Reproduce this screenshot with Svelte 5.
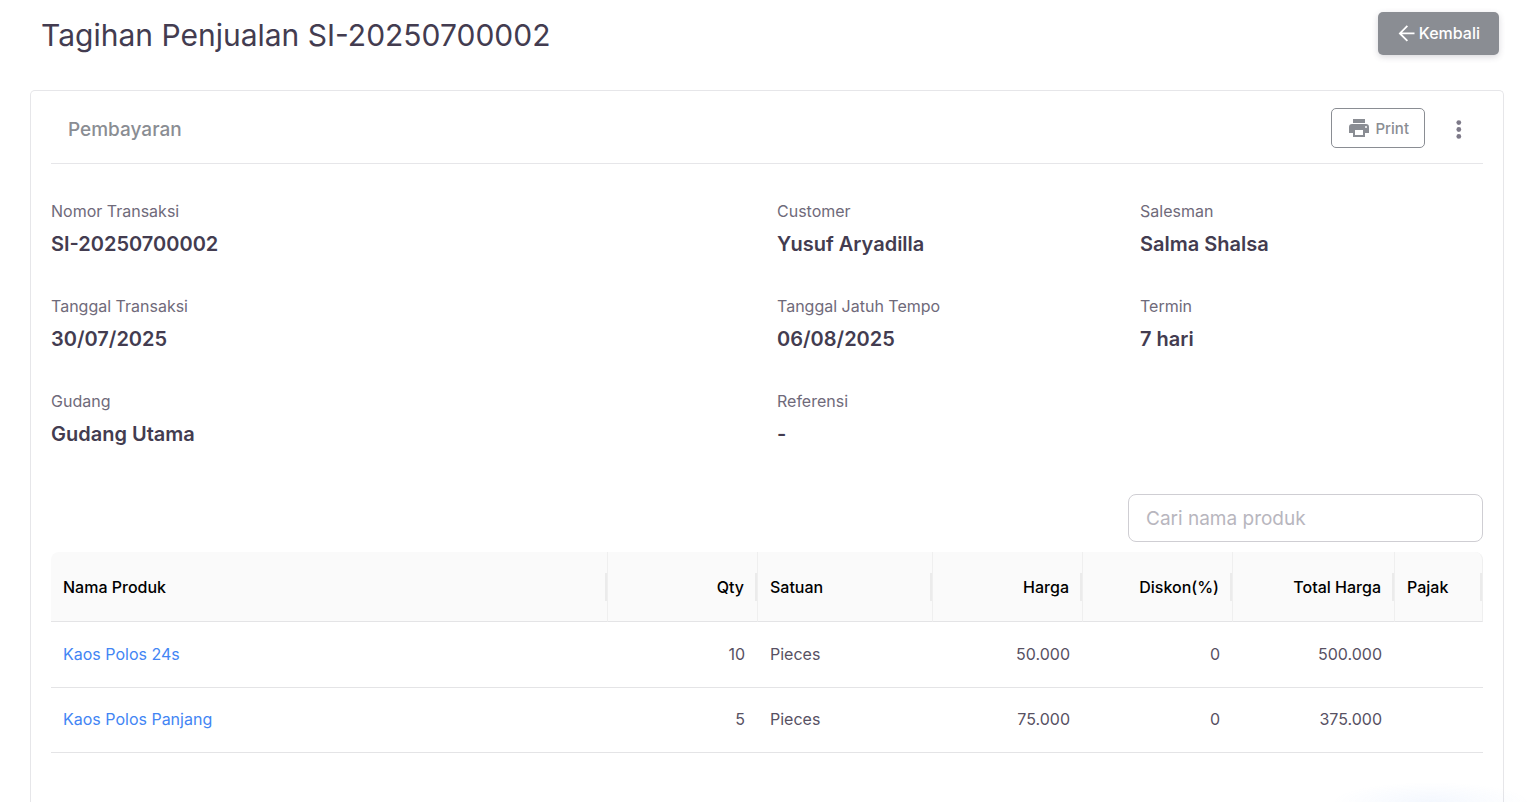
<script>
  const fields = [
    { label: 'Nomor Transaksi', value: 'SI-20250700002', wide: true },
    { label: 'Customer', value: 'Yusuf Aryadilla' },
    { label: 'Salesman', value: 'Salma Shalsa' },
    { label: 'Tanggal Transaksi', value: '30/07/2025', wide: true },
    { label: 'Tanggal Jatuh Tempo', value: '06/08/2025' },
    { label: 'Termin', value: '7 hari' },
    { label: 'Gudang', value: 'Gudang Utama', wide: true },
    { label: 'Referensi', value: '-' }
  ];

  const products = [
    { name: 'Kaos Polos 24s', qty: '10', unit: 'Pieces', price: '50.000', discount: '0', total: '500.000', tax: '' },
    { name: 'Kaos Polos Panjang', qty: '5', unit: 'Pieces', price: '75.000', discount: '0', total: '375.000', tax: '' }
  ];

  let search = $state('');
  let shown = $derived(products.filter((p) => p.name.toLowerCase().includes(search.toLowerCase())));
</script>

<div class="page">
  <header class="top">
    <h1>Tagihan Penjualan SI-20250700002</h1>
    <button class="back" type="button">
      <svg width="18" height="18" viewBox="0 0 24 24" fill="none" stroke="currentColor" stroke-width="2.4" aria-hidden="true">
        <path d="M22 12.6H3M12.5 2.6l-10 10 10 10" />
      </svg>
      Kembali
    </button>
  </header>

  <main class="card">
    <div class="bar">
      <h2>Pembayaran</h2>
      <div class="actions">
        <button class="print" type="button">
          <svg width="24" height="24" viewBox="0 0 24 24" fill="currentColor" aria-hidden="true">
            <path d="M18 3H6v4h12V3M19 12a1 1 0 0 1-1-1 1 1 0 0 1 1-1 1 1 0 0 1 1 1 1 1 0 0 1-1 1M16 19H8v-5h8v5M19 8H5a3 3 0 0 0-3 3v6h4v4h12v-4h4v-6a3 3 0 0 0-3-3Z" fill-rule="evenodd" />
          </svg>
          Print
        </button>
        <button class="more" type="button" aria-label="Menu">
          <svg width="24" height="24" viewBox="0 0 24 24" fill="currentColor" aria-hidden="true">
            <circle cx="11.8" cy="6.6" r="2.4" />
            <circle cx="11.8" cy="13.5" r="2.4" />
            <circle cx="11.8" cy="20.4" r="2.4" />
          </svg>
        </button>
      </div>
    </div>

    <dl class="details">
      {#each fields as field}
        <div class:wide={field.wide}>
          <dt>{field.label}</dt>
          <dd>{field.value}</dd>
        </div>
      {/each}
    </dl>

    <div class="search">
      <input type="text" placeholder="Cari nama produk" aria-label="Cari nama produk" bind:value={search} />
    </div>

    <table>
      <colgroup>
        <col />
        <col class="w150" />
        <col class="w175" />
        <col class="w150" />
        <col class="w150" />
        <col class="w162" />
        <col class="w88" />
      </colgroup>
      <thead>
        <tr>
          <th>Nama Produk</th>
          <th class="num">Qty</th>
          <th>Satuan</th>
          <th class="num">Harga</th>
          <th class="num">Diskon(%)</th>
          <th class="num">Total Harga</th>
          <th>Pajak</th>
        </tr>
      </thead>
      <tbody>
        {#each shown as p}
          <tr>
            <td><a href="#produk">{p.name}</a></td>
            <td class="num">{p.qty}</td>
            <td>{p.unit}</td>
            <td class="num">{p.price}</td>
            <td class="num">{p.discount}</td>
            <td class="num">{p.total}</td>
            <td>{p.tax}</td>
          </tr>
        {/each}
      </tbody>
    </table>
  </main>
  <div class="glow" aria-hidden="true"></div>
</div>

<style>
  :global(body) {
    background: #fff;
  }

  .page {
    box-sizing: border-box;
    display: flex;
    flex-direction: column;
    min-height: 100vh;
    padding: 12px 27px 0 30px;
    font-family: Inter, 'Liberation Sans', sans-serif;
    font-size: 16px;
    color: #433c50;
  }

  .page * {
    box-sizing: border-box;
  }

  button,
  input {
    font-family: inherit;
  }

  .top {
    display: flex;
    justify-content: space-between;
    align-items: flex-start;
    padding: 0 5px 0 11px;
    margin-bottom: 32px;
  }

  h1 {
    margin: 0;
    font-size: 30px;
    line-height: 46px;
    font-weight: 400;
  }

  .back {
    display: flex;
    align-items: center;
    gap: 3px;
    height: 43px;
    padding: 0 19px 2px 20px;
    border: 0;
    border-radius: 5px;
    background: #8a8d93;
    box-shadow: 0 2px 6px rgba(67, 60, 80, 0.2);
    color: #fff;
    font-size: 16px;
    font-weight: 500;
  }

  .card {
    flex: 1;
    padding: 0 20px 48px;
    border: 1px solid #e6e6e9;
    border-bottom: 0;
    border-radius: 5px 5px 0 0;
  }

  .bar {
    display: flex;
    justify-content: space-between;
    align-items: center;
    height: 73px;
    padding: 2px 4px 0 17px;
    border-bottom: 1px solid #e6e6e9;
  }

  h2 {
    margin: 0;
    padding-top: 2px;
    font-size: 19px;
    font-weight: 500;
    color: #8a8d93;
  }

  .actions {
    display: flex;
    align-items: center;
    gap: 14px;
  }

  .print {
    display: flex;
    align-items: center;
    gap: 4px;
    height: 40px;
    padding: 0 15px;
    border: 1px solid #8a8d93;
    border-radius: 5px;
    background: none;
    color: #8a8d93;
    font-size: 15px;
    font-weight: 500;
  }

  .more {
    display: flex;
    align-items: center;
    justify-content: center;
    width: 40px;
    height: 40px;
    padding: 0;
    border: 0;
    background: none;
    color: #7d7988;
  }

  .details {
    display: grid;
    grid-template-columns: repeat(4, 1fr);
    gap: 34px 20px;
    margin: 34px 0 45px;
  }

  .wide {
    grid-column: span 2;
  }

  dt {
    line-height: 26px;
    color: #6f6a7a;
  }

  dd {
    margin: 6px 0 0;
    font-size: 20px;
    line-height: 29px;
    font-weight: 600;
  }

  .search {
    display: flex;
    justify-content: flex-end;
    margin-bottom: 10px;
  }

  input {
    width: 355px;
    height: 48px;
    padding: 0 17px;
    border: 1px solid #cfced3;
    border-radius: 8px;
    background: none;
    color: #433c50;
    font-size: 19px;
  }

  input::placeholder {
    color: #b8b6be;
    opacity: 1;
  }

  table {
    width: 100%;
    table-layout: fixed;
    border-collapse: separate;
    border-spacing: 0;
  }

  .w88 {
    width: 88px;
  }

  .w150 {
    width: 150px;
  }

  .w162 {
    width: 162px;
  }

  .w175 {
    width: 175px;
  }

  th,
  td {
    padding: 0 13px 0 12px;
    border-bottom: 1px solid #e4e4e6;
    text-align: left;
  }

  th {
    height: 70px;
    background: linear-gradient(#ebebeb, #ebebeb) right center / 2px 28px no-repeat, #fafafa;
    border-right: 1px solid #efefef;
    color: #000;
    font-weight: 500;
  }

  th:first-child {
    border-top-left-radius: 8px;
  }

  th:last-child {
    border-top-right-radius: 8px;
  }

  td {
    height: 65px;
    padding-bottom: 2px;
    color: #575163;
  }

  tbody tr:first-child td {
    height: 66px;
  }

  .num {
    text-align: right;
  }

  a {
    color: #4285f4;
    text-decoration: none;
  }

  /* Soft light spilling in from below the bottom right corner of the window */
  .glow {
    position: fixed;
    right: 0;
    bottom: 0;
    width: 200px;
    height: 20px;
    background: radial-gradient(ellipse at bottom, rgba(66, 133, 244, 0.06), transparent 70%);
    pointer-events: none;
  }
</style>
